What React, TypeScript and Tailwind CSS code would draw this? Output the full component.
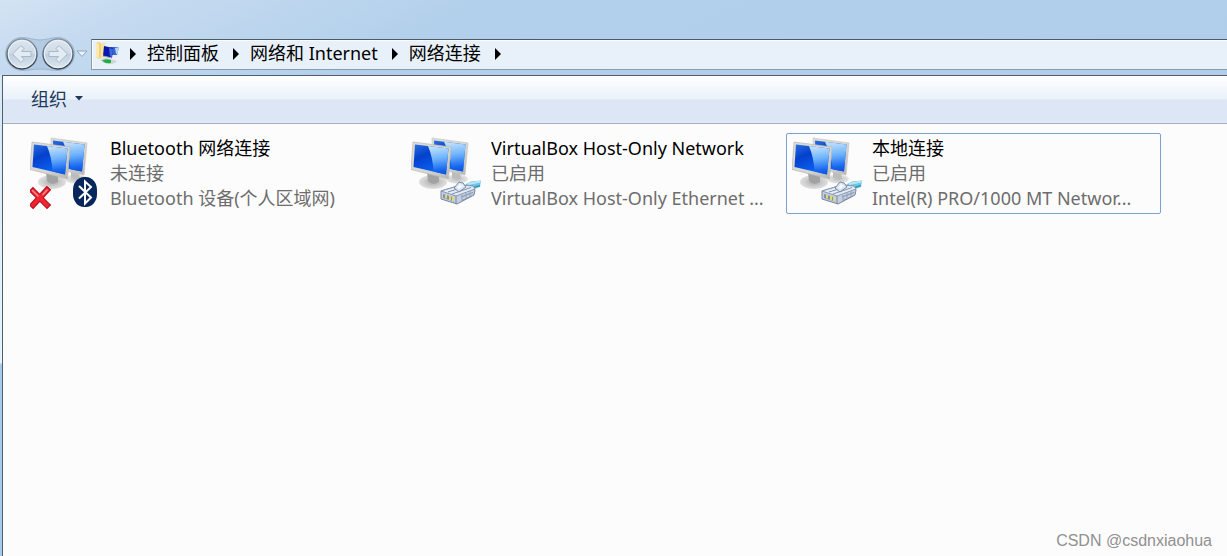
import React from "react";

type Badge = "bluetooth" | "cable";

interface Connection {
  name: string;
  status: string;
  device: string;
  badge: Badge;
  selected?: boolean;
}

const connections: Connection[] = [
  { name: "Bluetooth 网络连接", status: "未连接", device: "Bluetooth 设备(个人区域网)", badge: "bluetooth" },
  { name: "VirtualBox Host-Only Network", status: "已启用", device: "VirtualBox Host-Only Ethernet ...", badge: "cable" },
  { name: "本地连接", status: "已启用", device: "Intel(R) PRO/1000 MT Networ...", badge: "cable", selected: true },
];

const crumbs = ["控制面板", "网络和 Internet", "网络连接"];

function SharedGradients() {
  return (
    <svg className="absolute h-0 w-0" aria-hidden="true">
      <defs>
        <linearGradient id="screen" x1="0" y1="0" x2="0.5" y2="1">
          <stop offset="0" stopColor="#2a6fe0" />
          <stop offset="0.4" stopColor="#0540cc" />
          <stop offset="1" stopColor="#0a66f8" />
        </linearGradient>
        <linearGradient id="glare" x1="0.4" y1="0" x2="0.5" y2="1">
          <stop offset="0" stopColor="#c4e2fd" />
          <stop offset="0.45" stopColor="#6db2fb" />
          <stop offset="0.85" stopColor="#1767f0" />
          <stop offset="1" stopColor="#1054dc" />
        </linearGradient>
        <linearGradient id="frame" x1="0" y1="0" x2="1" y2="1">
          <stop offset="0" stopColor="#dcdcd8" />
          <stop offset="0.6" stopColor="#d6d6d3" />
          <stop offset="1" stopColor="#b5b3b0" />
        </linearGradient>
        <radialGradient id="stand">
          <stop offset="0" stopColor="#a9a9a9" />
          <stop offset="0.65" stopColor="#cfcfcf" />
          <stop offset="1" stopColor="#dfdfdf" />
        </radialGradient>
        <linearGradient id="orb" x1="0" y1="0" x2="0" y2="1">
          <stop offset="0" stopColor="#dce6f0" />
          <stop offset="0.48" stopColor="#cddae7" />
          <stop offset="0.52" stopColor="#bfcfdf" />
          <stop offset="1" stopColor="#dde8f2" />
        </linearGradient>
        <linearGradient id="orbRing" x1="0" y1="0" x2="0" y2="1">
          <stop offset="0" stopColor="#8796a5" />
          <stop offset="1" stopColor="#333c45" />
        </linearGradient>
      </defs>
    </svg>
  );
}

function BluetoothBadge() {
  return (
    <g>
      <rect x="43" y="41" width="24" height="30" rx="11" ry="13" fill="#06275c" />
      <path d="M49 50 61 61.5 55 67.5V45.5L61 51 49 62.5" fill="none" stroke="#fff" strokeWidth="2" />
      <path d="M3 55 17 69M17 54 3 69" stroke="#b50d16" strokeWidth="6" strokeLinecap="square" />
      <path d="M3 55 17 69M17 54 3 69" stroke="#ee2430" strokeWidth="4" strokeLinecap="square" />
      <path d="M2.5 54.5 8 60M17 54 13 58.5" stroke="#ff8c90" strokeWidth="1.5" strokeLinecap="round" />
    </g>
  );
}

function CableBadge() {
  return (
    <g strokeLinejoin="round">
      <path d="M55 48 60 45.5 70 44.5 69 51 60 54 54 53Z" fill="#71c6e2" />
      <path d="M57 48 69.5 45.5" stroke="#b8e8f5" strokeWidth="2" />
      <path d="M61 52 69 49.5" stroke="#319abb" strokeWidth="1.5" />
      <path d="M30 55 50 49 62 50 64 54 63 59 46 68 30 63Z" fill="#c3cee0" stroke="#77879f" />
      <path d="M30 55 50 49 62 50 64 53 45 60Z" fill="#e4ebf5" stroke="#8c9bb2" />
      <path d="M45 60V68" stroke="#77879f" />
      <path d="M43 52 48 46 52 47 55 51 48 56Z" fill="#dbe6f3" stroke="#7789a4" />
      <path d="M46 51 49 48 52 50 48 53Z" fill="#f8fbfd" />
      <path d="M37 56 45 53.5M41 58 60 51.5M50 61 62 56.5M51 64.5 61 60" stroke="#8292ab" />
      <path d="M32 58 43 61.5V65.5L32 62Z" fill="#8592a0" />
      <path d="M35 59V62.5M39 60V64M42 61V65" stroke="#ded777" strokeWidth="2" />
      <path d="M51 59V65M55 57V63M59 55V61" stroke="#94a4bc" />
    </g>
  );
}

function ConnectionIcon({ badge }: { badge: Badge }) {
  return (
    <svg width="72" height="74" viewBox="0 0 72 74" className="shrink-0" aria-hidden="true">
      <ellipse cx="46" cy="43" rx="11" ry="4.5" fill="url(#stand)" fillOpacity="0.8" />
      <path d="M41 34 49 36 50 43 41 42Z" fill="#bcbcbb" />
      <path d="M21 2 57 7 54 39 22 32Z" fill="url(#frame)" stroke="#c6c6c3" strokeWidth="0.7" />
      <path d="M23 4.5 54.5 8.5 52 35.5 24 30Z" fill="url(#screen)" />
      <path d="M33 5.8 54.5 8.5 52 35.5 41 33.4Q39 18 33 5.8Z" fill="url(#glare)" />
      <ellipse cx="22" cy="46" rx="14" ry="7" fill="url(#stand)" />
      <path d="M16 36 28 39 28 46Q22 50 17 45Z" fill="#a2a2a2" />
      <path d="M2 6 40 11 37.5 43 0 33.5Z" fill="url(#frame)" stroke="#b9b9b6" strokeWidth="0.7" />
      <path d="M4 8.5 37.5 12.5 35 38.5 2.5 31Z" fill="url(#screen)" />
      <path d="M17 10 37.5 12.5 35 38.5 22.5 35.6Q22 22 17 10Z" fill="url(#glare)" />
      {badge === "bluetooth" ? <BluetoothBadge /> : <CableBadge />}
    </svg>
  );
}

function NavigationButtons() {
  const arrow = "M6.5 16 15 7.5 18 10.5 15.5 13.5H25V18.5H15.5L18 21.5 15 24.5Z";
  return (
    <div className="relative flex shrink-0 items-center">
      <svg width="72" height="36" viewBox="0 0 72 36" className="absolute left-0 top-0" aria-hidden="true">
        <path
          d="M18 1.5C25 1.5 30 4 36 4S47 1.5 54 1.5A16.5 16.5 0 0 1 54 34.5C47 34.5 43 33 36 33S25 34.5 18 34.5A16.5 16.5 0 0 1 18 1.5Z"
          fill="#a9c3dd"
          fillOpacity="0.65"
          stroke="#9fb6cc"
          strokeWidth="1"
        />
      </svg>
      <button type="button" aria-label="后退" className="relative flex h-9 w-9 items-center justify-center">
        <svg width="32" height="32" viewBox="0 0 32 32" aria-hidden="true">
          <circle cx="16" cy="16" r="15" fill="url(#orb)" stroke="url(#orbRing)" strokeWidth="1.4" />
          <circle cx="16" cy="16" r="13.7" fill="none" stroke="#eef5fb" />
          <path d={arrow} fill="#e4ecf3" stroke="#a9b8c6" strokeLinejoin="round" />
        </svg>
      </button>
      <button type="button" aria-label="前进" className="relative flex h-9 w-9 items-center justify-center">
        <svg width="32" height="32" viewBox="0 0 32 32" aria-hidden="true">
          <circle cx="16" cy="16" r="15" fill="url(#orb)" stroke="url(#orbRing)" strokeWidth="1.4" />
          <circle cx="16" cy="16" r="13.7" fill="none" stroke="#eef5fb" />
          <path d={arrow} transform="matrix(-1 0 0 1 32 0)" fill="#e4ecf3" stroke="#a9b8c6" strokeLinejoin="round" />
        </svg>
      </button>
      <button type="button" aria-label="最近的页面" className="flex h-9 w-3 items-center justify-center">
        <svg width="12" height="8" viewBox="0 0 12 8" aria-hidden="true">
          <path d="M1 1H11L6 6.5Z" fill="#e9f2fb" stroke="#8fa5bb" />
        </svg>
      </button>
    </div>
  );
}

function LocationIcon() {
  return (
    <svg width="24" height="24" viewBox="0 0 24 24" className="shrink-0" aria-hidden="true">
      <path d="M0 1 4 0 5 2 9 1 10 14 3 17 0 15Z" fill="#f0d27c" />
      <path d="M0 1 3 2 3 16 0 15Z" fill="#fbeab0" />
      <path d="M5 3 9 1V14L5 16Z" fill="#f9e5a0" />
      <path d="M14 5 23 5 21 13 15 13Z" fill="#3764d0" />
      <path d="M19 6 23 5 21.5 12 20 12Z" fill="#b6d4f4" />
      <path d="M8 4 17 6 16 16 7 14Z" fill="#0a17a8" />
      <path d="M13 6 17 7 16 15 14 14.5Z" fill="#3f68de" />
      <path d="M7 14 16 16" stroke="#9aa6bf" />
      <path d="M4 18 9 15.5 14 17 20 18.5 21 20 16 22 8 21Z" fill="#cfd7d8" />
      <path d="M6 18.5Q11 16.5 15 18L15 21Q10 22 8 20Z" fill="#1fae46" />
    </svg>
  );
}

function CrumbArrow() {
  return (
    <svg width="6" height="12" viewBox="0 0 6 12" className="shrink-0" aria-hidden="true">
      <path d="M0 0 6 6 0 12Z" fill="#000" />
    </svg>
  );
}

function AddressBar() {
  return (
    <nav
      aria-label="地址"
      className="flex h-[31px] min-w-0 flex-1 items-start border border-r-0 border-[#8a9bac] border-t-[#4d5a68] bg-[#e8f1fa] pl-1 shadow-[inset_1px_1px_0_#fafdff]"
    >
      <div className="flex h-7 items-center">
        <LocationIcon />
        <ol className="ml-2.5 flex items-center whitespace-nowrap text-lg leading-[26px] text-black">
          {crumbs.map((crumb) => (
            <li key={crumb} className="flex items-center">
              <CrumbArrow />
              <a href="#" className="ml-[11px] mr-3.5 pb-0.5">
                {crumb}
              </a>
            </li>
          ))}
          <li>
            <CrumbArrow />
          </li>
        </ol>
      </div>
    </nav>
  );
}

function ConnectionTile({ connection }: { connection: Connection }) {
  const { name, status, device, badge, selected } = connection;
  return (
    <li>
      <button
        type="button"
        className={`flex h-[81px] w-full items-start gap-2 rounded-xs border pl-[5px] pr-2 pt-0.5 text-left ${
          selected ? "border-[#7da2ce]" : "border-transparent"
        }`}
      >
        <ConnectionIcon badge={badge} />
        <span className="flex min-w-0 flex-1 flex-col text-lg leading-[25px] text-[#6d6d6d]">
          <span className="truncate text-black">{name}</span>
          <span className="truncate">{status}</span>
          <span className="truncate">{device}</span>
        </span>
      </button>
    </li>
  );
}

export default function App() {
  return (
    <div className="relative flex min-h-screen flex-col bg-[#b2d0eb] font-['Noto_Sans','Noto_Sans_CJK_SC',sans-serif]">
      <SharedGradients />
      <header className="flex h-[75px] items-start gap-[3px] bg-[linear-gradient(155deg,#d3e3f3_0%,#c5daf0_65px,#b2d0eb_210px,#b0ceea_100%)] pl-1 pt-9">
        <NavigationButtons />
        <div className="flex min-w-0 flex-1 pt-[3px]">
          <AddressBar />
        </div>
      </header>
      <div className="flex flex-1">
        <div className="w-0.5 bg-[linear-gradient(#d9e8f6_0,#e8f2fb_288px,#a9c9ea_289px)]" />
        <main className="flex min-w-0 flex-1 flex-col border-l border-t border-[#4f5f70] bg-[#fcfcfc]">
          <div className="flex h-12 items-center border-b border-[#a0afc3] bg-[linear-gradient(#ffffff_0,#e9f1fa_23px,#dce6f4_24px,#dce6f4_45px,#e4edf8_100%)] pl-7">
            <button type="button" className="flex items-center gap-2 pb-0.5 text-lg text-[#1e395b]">
              组织
              <svg width="8" height="5" viewBox="0 0 8 5" aria-hidden="true">
                <path d="M0 0H8L4 4.5Z" fill="#1e395b" />
              </svg>
            </button>
          </div>
          <ul className="grid grid-cols-[repeat(auto-fill,375px)] gap-1.5 pl-[21px] pt-[9px]">
            {connections.map((connection) => (
              <ConnectionTile key={connection.name} connection={connection} />
            ))}
          </ul>
          <footer className="mt-auto pb-[3px] pr-[15px] text-right font-['Liberation_Sans',sans-serif] text-base text-[#909090]">
            CSDN @csdnxiaohua
          </footer>
        </main>
      </div>
    </div>
  );
}
